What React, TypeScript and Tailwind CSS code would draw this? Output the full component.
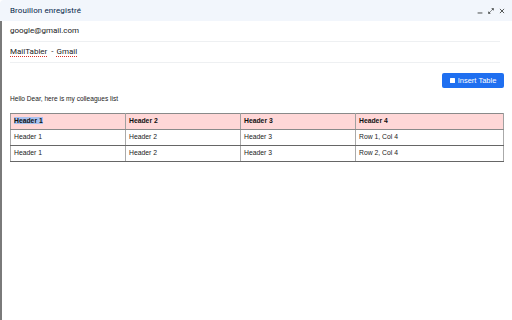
import { useState } from "react";

const rows = [
  ["Header 1", "Header 2", "Header 3", "Row 1, Col 4"],
  ["Header 1", "Header 2", "Header 3", "Row 2, Col 4"],
];

function HeaderIcons() {
  return (
    <div className="flex items-center gap-[5px] text-[#444746]">
      {/* minimize */}
      <svg width="6" height="6" viewBox="0 0 10 10">
        <rect x="1" y="7.5" width="8" height="1.6" fill="currentColor" />
      </svg>
      {/* pop out */}
      <svg width="6" height="6" viewBox="0 0 10 10" fill="none" stroke="currentColor" strokeWidth="1.4">
        <path d="M6 1h3v3M9 1L5.5 4.5M4 9H1V6M1 9l3.5-3.5" />
      </svg>
      {/* close */}
      <svg width="6" height="6" viewBox="0 0 10 10" fill="none" stroke="currentColor" strokeWidth="1.5">
        <path d="M1.5 1.5l7 7M8.5 1.5l-7 7" />
      </svg>
    </div>
  );
}

export default function App() {
  const [inserted] = useState(true);

  return (
    <div className="w-[512px] h-[320px] bg-white overflow-hidden flex flex-col font-['Liberation_Sans',Arial,sans-serif]">
      {/* Title bar */}
      <div className="h-[21px] shrink-0 bg-[#f2f6fc] rounded-tl-[4px] flex items-center justify-between pl-[10px] pr-[7px]">
        <span className="text-[8px] font-normal text-[#041e49] font-['Roboto',sans-serif] tracking-[0.1px]">
          Brouillon enregistré
        </span>
        <HeaderIcons />
      </div>

      <div className="flex-1 border-l-2 border-[#7a7a7a] flex flex-col">
        {/* Recipient */}
        <div className="ml-[8px] mr-[12px] h-[21px] flex items-center border-b border-[#eef0f2] text-[8px] text-[#222] font-['Roboto',sans-serif]">
          google@gmail.com
        </div>

        {/* Subject */}
        <div className="ml-[8px] mr-[12px] h-[21px] flex items-center border-b border-[#eef0f2] text-[8px] text-[#222] font-['Roboto',sans-serif]">
          <span className="underline decoration-dotted decoration-[#d93025] decoration-1 underline-offset-[2px]">MailTabler</span>
          <span className="ml-[4px]">-</span>
          <span className="ml-[3px] underline decoration-dotted decoration-[#d93025] decoration-1 underline-offset-[2px]">Gmail</span>
        </div>

        {/* Toolbar */}
        <div className="flex justify-end pr-[8px] pt-[10px]">
          <button className="h-[15px] w-[62px] rounded-[2px] bg-[#1f6ff0] text-white text-[7.5px] flex items-center justify-center gap-[3px]">
            <span className="w-[5px] h-[5px] bg-white rounded-[0.5px]" />
            Insert Table
          </button>
        </div>

        {/* Body */}
        <div className="pl-[8px] pr-[6px] pt-[6px]">
          <p className="text-[6.6px] text-[#222]">Hello Dear, here is my colleagues list</p>
          {inserted && (
            <table className="mt-[9px] w-[494px] border-collapse table-fixed text-[6.8px] text-[#222]">
              <colgroup>
                <col className="w-[115px]" />
                <col className="w-[115px]" />
                <col className="w-[115px]" />
                <col />
              </colgroup>
              <thead>
                <tr className="bg-[#ffd7d7] h-[16px]">
                  {["Header 1", "Header 2", "Header 3", "Header 4"].map((h, i) => (
                    <th
                      key={h}
                      className="border border-[#8a8a8a] border-l-[#a0a0a0] border-r-[#a0a0a0] text-left font-bold px-[3px] text-[#111]"
                    >
                      {i === 0 ? <span className="bg-[#a9c1ee]">{h}</span> : h}
                    </th>
                  ))}
                </tr>
              </thead>
              <tbody>
                {rows.map((r, ri) => (
                  <tr key={ri} className="h-[16px]">
                    {r.map((c, ci) => (
                      <td
                        key={ci}
                        className="border border-[#666] border-l-[#aaa] border-r-[#aaa] px-[3px] font-normal"
                      >
                        {c}
                      </td>
                    ))}
                  </tr>
                ))}
              </tbody>
            </table>
          )}
        </div>
      </div>
    </div>
  );
}
